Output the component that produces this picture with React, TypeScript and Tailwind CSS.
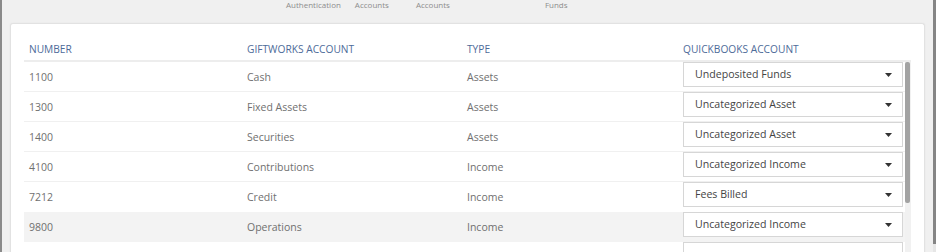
const rows = [
  { number: "1100", account: "Cash", type: "Assets", qb: "Undeposited Funds" },
  { number: "1300", account: "Fixed Assets", type: "Assets", qb: "Uncategorized Asset" },
  { number: "1400", account: "Securities", type: "Assets", qb: "Uncategorized Asset" },
  { number: "4100", account: "Contributions", type: "Income", qb: "Uncategorized Income" },
  { number: "7212", account: "Credit", type: "Income", qb: "Fees Billed" },
  { number: "9800", account: "Operations", type: "Income", qb: "Uncategorized Income" },
  { number: "", account: "", type: "", qb: "" },
];

const Caret = () => (
  <svg width="7" height="4" viewBox="0 0 7 4" className="shrink-0">
    <path d="M0 0h7L3.5 4z" fill="#333" />
  </svg>
);

const App = () => {
  return (
    <div
      className="flex h-[252px] w-[936px] overflow-hidden bg-[#f0f0f0]"
      style={{ fontFamily: '"Open Sans", "Liberation Sans", sans-serif' }}
    >
      <div className="w-[2px] shrink-0 bg-[#8a8a8a]" />

      <div className="flex min-w-0 flex-1 flex-col">
        {/* wizard step labels, cut off at the top */}
        <div className="-mt-[1px] flex h-[12px] shrink-0 text-[8px] leading-[11px] text-[#8d8d8d]">
          <span className="ml-[284px]">Authentication</span>
          <span className="ml-[14px]">Accounts</span>
          <span className="ml-[27px]">Accounts</span>
          <span className="ml-[95px]">Funds</span>
        </div>

        <div className="ml-[8px] mr-[8px] mt-[12px] flex-1 rounded-t-[3px] border border-b-0 border-[#e2e2e2] bg-white pl-[13px] pr-[13px] pt-[13px] shadow-[0_0_2px_rgba(0,0,0,0.05)]">
          <div className="flex h-[25px] items-center border-b-2 border-[#ededed] pt-[3px] text-[10.2px] uppercase text-[#4e6b99]">
            <div className="w-[218px] pl-[5px]">Number</div>
            <div className="w-[220px] pl-[5px]">Giftworks Account</div>
            <div className="w-[216px] pl-[5px]">Type</div>
            <div className="flex-1 pl-[5px]">Quickbooks Account</div>
          </div>

          <div className="flex">
            <div className="flex-1">
              {rows.map((row, i) => (
                <div
                  key={i}
                  className={`flex h-[30px] items-center text-[10.5px] text-[#707070] ${
                    i === 5 ? "bg-[#f3f3f3]" : ""
                  } ${i < 4 ? "border-b border-[#f0f0f0]" : ""}`}
                >
                  <div className="w-[218px] pl-[5px] pt-[2px]">{row.number}</div>
                  <div className="w-[220px] pl-[5px] pt-[2px]">{row.account}</div>
                  <div className="w-[216px] pl-[5px] pt-[2px]">{row.type}</div>
                  <div className="flex-1 self-start pl-[5px] pr-[2px]">
                    <div className="flex h-[25px] items-center justify-between border border-[#d6d6d6] bg-white pl-[11px] pr-[10px] pt-px text-[10.6px] text-[#444]">
                      <span>{row.qb}</span>
                      {row.qb && <Caret />}
                    </div>
                  </div>
                </div>
              ))}
            </div>
            <div className="w-[6px] shrink-0 bg-[#f1f1f1]">
              <div className="h-[141px] w-[5px] rounded-[2px] bg-[#a3a3a3]" />
            </div>
          </div>
        </div>
      </div>

      <div className="flex w-[3px] shrink-0 flex-col bg-[#e6e6e6]">
        <div className="h-[244px] bg-[#858585]" />
      </div>
    </div>
  );
};

export default App;
